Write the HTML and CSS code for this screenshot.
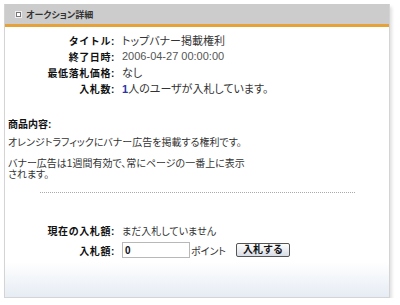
FILE: index.html
```html
<!DOCTYPE html>
<html lang="ja">
<head>
    <meta charset="UTF-8">
    <title>オークション詳細</title>
    <link rel="stylesheet" href="styles.css">
</head>
<body>
    <div class="panel">
        <div class="panel-head">
            <span class="head-icon"></span>
            <span class="head-title">オークション詳細</span>
        </div>
        <div class="panel-body">
            <div class="info">
                <div class="row"><span class="label">タイトル:</span><span class="value">トップバナー掲載権利</span></div>
                <div class="row"><span class="label">終了日時:</span><span class="value date">2006-04-27 00:00:00</span></div>
                <div class="row"><span class="label">最低落札価格:</span><span class="value">なし</span></div>
                <div class="row"><span class="label">入札数:</span><span class="value"><b class="count">1</b>人のユーザが入札しています。</span></div>
            </div>

            <div class="desc">
                <h4>商品内容:</h4>
                <p>オレンジトラフィックにバナー広告を掲載する権利です。</p>
                <p>バナー広告は1週間有効で、常にページの一番上に表示<br>されます。</p>
            </div>

            <div class="divider"></div>

            <div class="bid">
                <div class="row"><span class="label">現在の入札額:</span><span class="value">まだ入札していません</span></div>
                <div class="row">
                    <span class="label">入札額:</span>
                    <span class="value bid-form">
                        <input class="bid-input" type="text" value="0">
                        <span class="unit">ポイント</span>
                        <button class="bid-button">入札する</button>
                    </span>
                </div>
            </div>
        </div>
    </div>
</body>
</html>
```

FILE: styles.css
```css
body {
    margin: 0;
    background-color: #fff;
    font-family: "Liberation Sans", "Noto Sans CJK JP", sans-serif;
    font-size: 10px;
    color: #333;
}

.panel {
    width: 384px;
    height: 293px;
    margin: 4px 0 0 4px;
    border: 1px solid #d4d4d4;
    border-top: none;
    box-shadow: 2px 3px 3px rgba(0,0,0,0.12);
    background: linear-gradient(to bottom, #fff 0, #fff 258px, #e6ecf4 100%);
}

.panel-head {
    height: 20px;
    background-color: #cccccc;
    border-bottom: 3px solid #e6a23a;
    display: flex;
    align-items: center;
    padding-left: 11px;
    gap: 5px;
}

.head-icon {
    width: 3px;
    height: 3px;
    border: 1px solid #777;
    background-color: #fff;
    box-shadow: 0 0 0 1px #eee;
}

.head-title {
    font-size: 9px;
    font-weight: bold;
    color: #333;
    font-feature-settings: "palt";
}

.panel-body {
    padding-top: 5px;
}

.row {
    display: flex;
    align-items: center;
    height: 16px;
}

.label {
    width: 110px;
    text-align: right;
    font-weight: bold;
    color: #111;
    padding-right: 7px;
    letter-spacing: 0.6px;
    flex-shrink: 0;
}

.value {
    font-size: 10px;
    font-feature-settings: "palt";
}

.info .value {
    font-size: 11px;
}

.date {
    color: #555;
}

.count {
    color: #2a35a8;
}

.desc {
    padding: 21px 0 0 3px;
    font-feature-settings: "palt";
}

.desc h4 {
    margin: 0;
    font-size: 10px;
    color: #111;
    line-height: 16px;
}

.desc p {
    margin: 4px 0 0;
    line-height: 11px;
}

.desc p + p {
    margin-top: 10px;
}

.divider {
    margin: 12px 34px 0 35px;
    border-top: 1px dotted #aaa;
}

.bid {
    padding-top: 27px;
}

.bid .row {
    height: 20px;
}

.bid-form {
    display: flex;
    align-items: center;
}

.bid-input {
    width: 62px;
    height: 12px;
    margin: 0;
    padding: 1px 2px;
    border: 1px solid #b8b8b8;
    font-family: "Liberation Sans", sans-serif;
    font-size: 10px;
    font-weight: bold;
    color: #111;
}

.unit {
    width: 45px;
    margin-left: 1px;
}

.bid-button {
    height: 14px;
    padding: 0 6px;
    border: 1px solid #555;
    border-radius: 2px;
    background: linear-gradient(to bottom, #fdfdfd, #d8dde6);
    font-family: "Liberation Sans", "Noto Sans CJK JP", sans-serif;
    font-size: 10px;
    font-weight: bold;
    color: #111;
    line-height: 12px;
}
```
